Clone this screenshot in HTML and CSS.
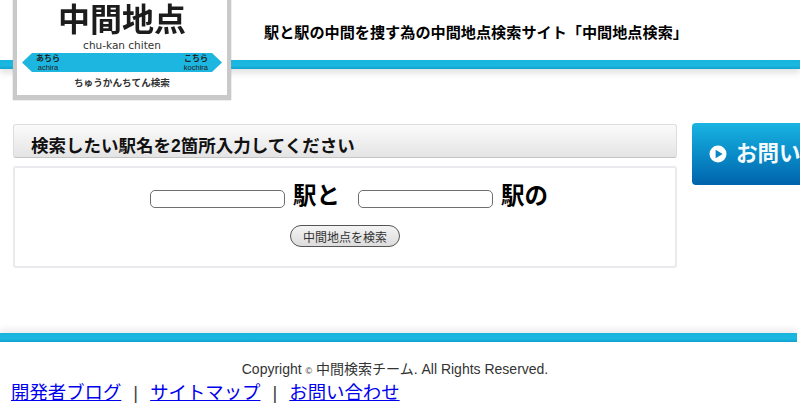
FILE: index.html
```html
<!DOCTYPE html>
<html lang="ja">
<head>
  <meta charset="UTF-8" />
  <title>中間地点検索</title>
  <link rel="stylesheet" href="styles.css">
</head>
<body>
  <!-- Header -->
  <header class="header">
    <div class="logo">
      <div class="logo-title">中間地点</div>
      <div class="logo-roman">chu-kan chiten</div>
      <div class="logo-band">
        <div class="band-side"><span class="band-kana">あちら</span><span class="band-roman">achira</span></div>
        <div class="band-side"><span class="band-kana">こちら</span><span class="band-roman">kochira</span></div>
      </div>
      <div class="logo-sub">ちゅうかんちてん検索</div>
    </div>
    <div class="tagline">駅と駅の中間を捜す為の中間地点検索サイト「中間地点検索」</div>
    <div class="stripe header-stripe"></div>
  </header>

  <!-- Main -->
  <main class="main">
    <section class="search">
      <h2 class="search-title">検索したい駅名を2箇所入力してください</h2>
      <form class="search-form">
        <div class="station-row">
          <input type="text" class="station-input" />
          <span class="station-label">駅と</span>
          <input type="text" class="station-input second" />
          <span class="station-label">駅の</span>
        </div>
        <button type="button" class="search-btn">中間地点を検索</button>
      </form>
    </section>
    <a class="contact-btn">
      <svg class="play-icon" width="18" height="18" viewBox="0 0 18 18">
        <circle cx="9" cy="9" r="8.5" fill="#fff"/>
        <path d="M6.6 4.8 L13.6 9 L6.6 13.2 Z" fill="#0a86c4"/>
      </svg>
      <span class="contact-text">お問い合わせ</span>
    </a>
  </main>

  <!-- Footer -->
  <footer class="footer">
    <div class="stripe footer-stripe"></div>
    <p class="copyright">Copyright <small>©</small> 中間検索チーム. All Rights Reserved.</p>
    <p class="footer-links">
      <a href="#">開発者ブログ</a><span class="sep">|</span><a href="#">サイトマップ</a><span class="sep">|</span><a href="#">お問い合わせ</a>
    </p>
  </footer>
</body>
</html>
```

FILE: styles.css
```css
html, body {
  height: 100%;
}

body {
  margin: 0;
  background: #fff;
  color: #000;
  font-family: "Liberation Sans", "Noto Sans CJK JP", sans-serif;
  overflow: hidden;
}

/* Header */
.header {
  position: relative;
  height: 100px;
}

.stripe {
  height: 9px;
  background: linear-gradient(#16b4de, #1cb8e0 60%, #0fa3d0);
}

.header-stripe {
  position: absolute;
  top: 60px;
  left: 0;
  right: 0;
  box-shadow: 0 4px 6px rgba(0, 0, 0, 0.12);
}

.tagline {
  position: absolute;
  top: 24px;
  left: 264px;
  font-size: 15.15px;
  line-height: 18px;
  font-weight: bold;
  white-space: nowrap;
}

.logo {
  position: absolute;
  z-index: 1;
  left: 13px;
  bottom: 0;
  box-sizing: border-box;
  width: 218px;
  height: 120px;
  padding-top: 18px;
  background: #fff;
  border: 4px solid #c9c9c9;
  border-bottom-width: 5px;
  box-shadow: 0 0 1px #999;
  text-align: center;
}

.logo-title {
  font-size: 32px;
  line-height: 37px;
  font-weight: bold;
  color: #1c1c1c;
  filter: blur(0.4px);
}

.logo-roman {
  font-family: "DejaVu Sans", sans-serif;
  font-size: 10.5px;
  line-height: 13px;
  color: #333;
}

.logo-band {
  display: flex;
  justify-content: space-between;
  box-sizing: border-box;
  height: 19px;
  margin: 1px 5px 0;
  padding: 0 14px;
  background: #1cb6e0;
  clip-path: polygon(0 50%, 5% 0, 95% 0, 100% 50%, 95% 100%, 5% 100%);
}

.band-side {
  display: flex;
  flex-direction: column;
  align-items: center;
  color: #222;
}

.band-kana {
  font-size: 8px;
  line-height: 10px;
  margin-top: 1px;
  font-weight: bold;
}

.band-roman {
  font-size: 7.5px;
  line-height: 7px;
}

.logo-sub {
  margin-top: 5px;
  font-size: 9.6px;
  line-height: 12px;
  font-weight: bold;
  color: #333;
}

/* Main */
.main {
  display: flex;
  align-items: flex-start;
  gap: 15px;
  height: 226px;
  padding: 23px 0 0 13px;
  box-sizing: border-box;
  width: 900px;
}

.search {
  flex: 0 0 664px;
  padding-top: 1px;
}

.search-title {
  box-sizing: border-box;
  height: 34px;
  margin: 0 0 8px;
  padding: 9px 0 0 17px;
  border: 1px solid #ddd;
  border-bottom-color: #c4c4c4;
  border-radius: 3px;
  background: linear-gradient(#fbfbfb, #e4e4e4);
  font-size: 17.5px;
  line-height: 24px;
  font-weight: bold;
  color: #111;
}

.search-form {
  box-sizing: border-box;
  height: 102px;
  padding-top: 15px;
  border: 2px solid #e9e9ee;
  border-radius: 3px;
  text-align: center;
}

.station-row {
  display: flex;
  justify-content: center;
  align-items: center;
  height: 26px;
  padding-left: 8px;
}

.station-input {
  box-sizing: border-box;
  width: 135px;
  height: 18px;
  margin: 6px 0 0;
  padding: 0 4px;
  background: #fff;
  border: 1.5px solid #6f6f6f;
  border-radius: 5px;
}

.station-input.second {
  margin-left: 18px;
}

.station-label {
  margin-left: 8px;
  font-size: 23.5px;
  line-height: 26px;
  font-weight: bold;
}

.search-btn {
  display: block;
  width: 110px;
  height: 22px;
  margin: 16px auto 0;
  padding: 0;
  border: 1px solid #555;
  border-radius: 11px;
  background: linear-gradient(#f4f4f4, #dcdcdc);
  font-family: inherit;
  font-size: 12px;
  color: #333;
}

.contact-btn {
  display: flex;
  align-items: center;
  gap: 9px;
  box-sizing: border-box;
  width: 200px;
  height: 62px;
  padding-left: 17px;
  border-radius: 4px;
  background: linear-gradient(#19b4e2, #0a8cc8 50%, #0063ac);
  color: #f2fafd;
  font-size: 21.5px;
  font-weight: bold;
  white-space: nowrap;
}

.contact-text {
  margin-top: -5px;
}

/* Footer */
.footer-stripe {
  width: 797px;
  box-shadow: 0 -4px 6px rgba(0, 0, 0, 0.08);
}

.footer {
  margin-top: 7px;
  font-size: 14px;
}

.copyright {
  width: 790px;
  margin: 18px 0 0;
  line-height: 18px;
  color: #333;
  text-align: center;
}

.copyright small {
  font-size: 9px;
}

.footer-links {
  margin: 1px 0 0 11px;
  font-size: 18.4px;
  line-height: 24px;
}

.footer-links a {
  color: #00e;
}

.sep {
  margin: 0 12px;
  color: #444;
  font-weight: 300;
}
```
